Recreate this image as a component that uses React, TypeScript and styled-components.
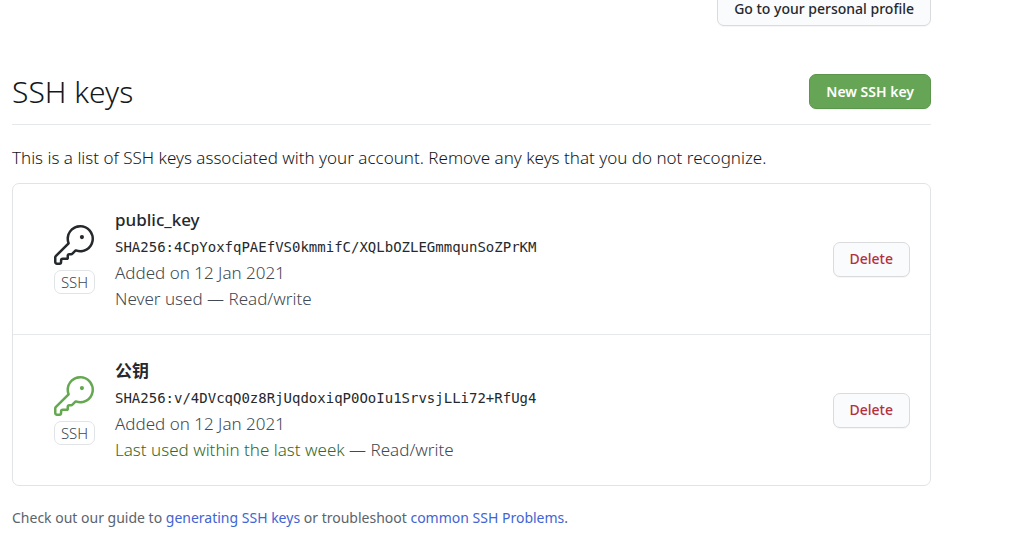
import React from "react";
import styled, { createGlobalStyle } from "styled-components";

const GlobalStyle = createGlobalStyle`
  *, *::before, *::after { box-sizing: border-box; }
  body {
    margin: 0;
    background: #ffffff;
    color: #14181c;
    font-family: "Noto Sans", "Noto Sans CJK SC", sans-serif;
    font-size: 17px;
    font-weight: 300;
    line-height: 26px;
    overflow: hidden;
  }
`;

const Page = styled.main`
  margin: -9px 95px 0 12px;
`;

const ProfileBar = styled.div`
  display: flex;
  justify-content: flex-end;
  margin-bottom: 48px;
`;

const Button = styled.button<{ $kind?: "default" | "primary" | "danger" }>`
  flex: none;
  height: 35px;
  padding: 0 16px;
  border: 1px solid ${(p) => (p.$kind === "primary" ? "#5a964b" : "#d9dbdd")};
  border-radius: 7px;
  background: ${(p) => (p.$kind === "primary" ? "#67a556" : "#fafbfd")};
  color: ${(p) => (p.$kind === "primary" ? "#ffffff" : p.$kind === "danger" ? "#b5303f" : "#24292e")};
  font-family: inherit;
  font-size: 14px;
  font-weight: ${(p) => (p.$kind === "primary" ? 600 : 500)};
  line-height: 20px;
  white-space: nowrap;
  box-shadow: 0 1px 0 rgba(27, 31, 35, 0.04);
  cursor: pointer;
`;

const Header = styled.header`
  display: flex;
  align-items: center;
  justify-content: space-between;
  padding-bottom: 15px;
  border-bottom: 1px solid #e6e8eb;
`;

const Heading = styled.h1`
  margin: 0;
  font-size: 30px;
  font-weight: 300;
  line-height: 35px;
`;

const Intro = styled.p`
  margin: 20px 0 12px;
`;

const KeyList = styled.ul`
  margin: 0;
  padding: 0;
  list-style: none;
  border: 1px solid #e1e4e6;
  border-radius: 7px;
`;

const KeyRow = styled.li`
  display: flex;
  align-items: center;
  padding: 22px 20px 22px 41px;

  & + & {
    border-top: 1px solid #e6e8eb;
  }
`;

const KeyBadge = styled.div<{ $active: boolean }>`
  display: flex;
  flex-direction: column;
  align-items: flex-start;
  gap: 5px;
  width: 41px;
  margin-right: 20px;
  color: ${(p) => (p.$active ? "#64a850" : "#24292e")};

  svg {
    display: block;
    width: 40px;
    height: 40px;
    fill: currentColor;
  }
`;

const KeyType = styled.span`
  width: 100%;
  border: 1px solid #e1e4e6;
  border-radius: 7px;
  color: #414952;
  font-size: 15px;
  line-height: 22px;
  text-align: center;
`;

const KeyDetails = styled.div`
  flex: 1;
  min-width: 0;
  color: #414952;
`;

const KeyName = styled.h2`
  margin: 0;
  color: #24292e;
  font-size: 17px;
  font-weight: 500;
  line-height: 28px;

  &:lang(zh) {
    font-weight: 700;
  }
`;

const Fingerprint = styled.code`
  display: block;
  color: #24292e;
  font-family: "DejaVu Sans Mono", monospace;
  font-size: 14px;
  line-height: 26px;
`;

const Meta = styled.div``;

const Usage = styled.span<{ $active: boolean }>`
  color: ${(p) => (p.$active ? "#34691f" : "inherit")};
`;

const Footnote = styled.p`
  margin: 20px 0 0;
  color: #5b636c;
  font-size: 14px;
  font-weight: 400;
  line-height: 24px;
`;

const Link = styled.a`
  color: #4164d4;
  text-decoration: none;
`;

const KeyIcon = () => (
  <svg viewBox="0 0 24 24" aria-hidden="true">
    <path d="M16.75 8.5a1.25 1.25 0 100-2.5 1.25 1.25 0 000 2.5z" />
    <path
      fillRule="evenodd"
      d="M15.75 0a8.25 8.25 0 00-7.851 10.79L.513 18.178A1.75 1.75 0 000 19.414v2.836C0 23.217.784 24 1.75 24h1.5A1.75 1.75 0 005 22.25v-1a.25.25 0 01.25-.25h2.735a.75.75 0 00.545-.22l.214-.213A.875.875 0 009 19.948V18.5a.25.25 0 01.25-.25h1.086c.464 0 .91-.184 1.237-.513l1.636-1.636A8.25 8.25 0 1015.75 0zM9 8.25a6.75 6.75 0 114.288 6.287.75.75 0 00-.804.168l-1.971 1.972a.25.25 0 01-.177.073H9.25A1.75 1.75 0 007.5 18.5v1H5.25a1.75 1.75 0 00-1.75 1.75v1a.25.25 0 01-.25.25h-1.5a.25.25 0 01-.25-.25v-2.836a.25.25 0 01.073-.177l7.722-7.721a.75.75 0 00.168-.804A6.73 6.73 0 019 8.25z"
    />
  </svg>
);

const keys = [
  {
    name: "public_key",
    lang: "en",
    fingerprint: "SHA256:4CpYoxfqPAEfVS0kmmifC/XQLbOZLEGmmqunSoZPrKM",
    added: "Added on 12 Jan 2021",
    usage: "Never used",
    active: false,
  },
  {
    name: "公钥",
    lang: "zh-CN",
    fingerprint: "SHA256:v/4DVcqQ0z8RjUqdoxiqP0OoIu1SrvsjLLi72+RfUg4",
    added: "Added on 12 Jan 2021",
    usage: "Last used within the last week",
    active: true,
  },
];

export default function App() {
  return (
    <>
      <GlobalStyle />
      <Page>
        <ProfileBar>
          <Button type="button">Go to your personal profile</Button>
        </ProfileBar>
        <Header>
          <Heading>SSH keys</Heading>
          <Button type="button" $kind="primary">New SSH key</Button>
        </Header>
        <Intro>
          This is a list of SSH keys associated with your account. Remove any keys that you do not recognize.
        </Intro>
        <KeyList>
          {keys.map((k) => (
            <KeyRow key={k.fingerprint}>
              <KeyBadge $active={k.active}>
                <KeyIcon />
                <KeyType>SSH</KeyType>
              </KeyBadge>
              <KeyDetails>
                <KeyName lang={k.lang}>{k.name}</KeyName>
                <Fingerprint>{k.fingerprint}</Fingerprint>
                <Meta>{k.added}</Meta>
                <Meta>
                  <Usage $active={k.active}>{k.usage}</Usage> — Read/write
                </Meta>
              </KeyDetails>
              <Button type="button" $kind="danger">Delete</Button>
            </KeyRow>
          ))}
        </KeyList>
        <Footnote>
          Check out our guide to <Link href="#generating">generating SSH keys</Link> or troubleshoot{" "}
          <Link href="#problems">common SSH Problems</Link>.
        </Footnote>
      </Page>
    </>
  );
}
